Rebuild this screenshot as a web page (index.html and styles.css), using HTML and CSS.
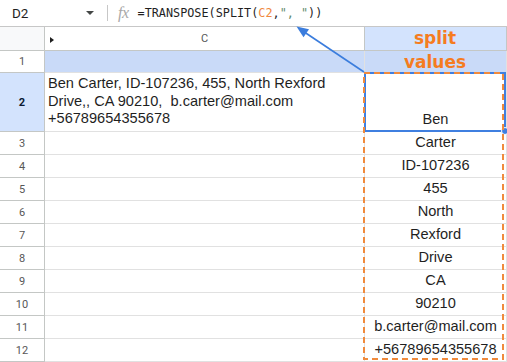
FILE: index.html
```html
<!DOCTYPE html>
<html>
<head>
<meta charset="utf-8">
<link rel="stylesheet" href="styles.css">
</head>
<body>
<div class="page">
  <div class="fbar">
    <div class="namebox">D2</div>
    <div class="dd"></div>
    <div class="sep"></div>
    <div class="fx">fx</div>
    <div class="formula">=TRANSPOSE(SPLIT(<span class="ref">C2</span>,<span class="str">", "</span>))</div>
  </div>
  <div class="grid">
    <div class="corner"></div>
    <div class="colhead colc"><span class="tri"></span><span class="clab">C</span></div>
    <div class="colhead sel"></div>

    <div class="rowhead">1</div>
    <div class="cell fill"></div>
    <div class="cell fill"></div>

    <div class="rowhead selrow">2</div>
    <div class="cell wrap">Ben Carter, ID-107236, 455, North Rexford Drive,, CA 90210,&nbsp; b.carter@mail.com +56789654355678</div>
    <div class="cell val">Ben</div>

    <div class="rowhead">3</div><div class="cell"></div><div class="cell val">Carter</div>
    <div class="rowhead">4</div><div class="cell"></div><div class="cell val">ID-107236</div>
    <div class="rowhead">5</div><div class="cell"></div><div class="cell val">455</div>
    <div class="rowhead">6</div><div class="cell"></div><div class="cell val">North</div>
    <div class="rowhead">7</div><div class="cell"></div><div class="cell val">Rexford</div>
    <div class="rowhead">8</div><div class="cell"></div><div class="cell val">Drive</div>
    <div class="rowhead">9</div><div class="cell"></div><div class="cell val">CA</div>
    <div class="rowhead">10</div><div class="cell"></div><div class="cell val">90210</div>
    <div class="rowhead">11</div><div class="cell"></div><div class="cell val">b.carter@mail.com</div>
    <div class="rowhead">12</div><div class="cell"></div><div class="cell val">+56789654355678</div>
  </div>

  <div class="selection"><span class="handle"></span></div>
  <div class="note">split<br>values</div>
  <svg class="annot" width="507" height="362" viewBox="0 0 507 362">
    <rect x="364" y="73" width="139" height="286" fill="none" stroke="#f08a3c" stroke-width="2" stroke-dasharray="6 4"/>
    <line x1="364" y1="72" x2="305" y2="32.5" stroke="#3b7ddd" stroke-width="1.6"/>
    <polygon points="296.5,26.5 309,29.2 303.5,37.2" fill="#3b7ddd"/>
  </svg>
</div>
</body>
</html>
```
FILE: styles.css
```css
html, body {
  margin: 0;
  padding: 0;
  background: #ffffff;
}
body {
  width: 507px;
  height: 362px;
  overflow: hidden;
  font-family: "Liberation Sans", Arial, sans-serif;
}
.page {
  position: relative;
  width: 507px;
  height: 362px;
}
.fbar {
  height: 27px;
  box-sizing: border-box;
  border-bottom: 1px solid #c7c7c7;
  display: flex;
  align-items: center;
}
.namebox {
  font-family: Roboto, "Liberation Sans", sans-serif;
  font-size: 13.5px;
  color: #1f1f1f;
  margin-left: 12px;
  width: 74px;
}
.dd {
  width: 0;
  height: 0;
  border-left: 4px solid transparent;
  border-right: 4px solid transparent;
  border-top: 4px solid #444746;
  margin-left: 0;
}
.sep {
  width: 1px;
  height: 16px;
  background: #c7c7c7;
  margin-left: 13px;
}
.fx {
  font-family: "Liberation Serif", serif;
  font-style: italic;
  font-size: 16px;
  color: #a8a8a8;
  margin-left: 10px;
  letter-spacing: -0.5px;
}
.formula {
  font-family: "DejaVu Sans Mono", monospace;
  font-size: 11.8px;
  color: #1f1f1f;
  margin-left: 9px;
  white-space: pre;
}
.ref { color: #f0883e; }
.str { color: #5f8a6a; }

.grid {
  display: grid;
  grid-template-columns: 45px 320px 142px;
  grid-template-rows: 24px 22px 59px repeat(10, 23px);
}
.grid > div {
  box-sizing: border-box;
}
.corner {
  background: #f8f9fa;
  border-right: 1px solid #c4c7c5;
  border-bottom: 1px solid #c4c7c5;
}
.colhead {
  background: #ffffff;
  border-right: 1px solid #c4c7c5;
  border-bottom: 1px solid #c4c7c5;
  font-family: Roboto, "Liberation Sans", sans-serif;
  font-size: 11px;
  color: #575757;
  display: flex;
  align-items: center;
  position: relative;
}
.colc .clab {
  flex: 1;
  text-align: center;
}
.tri {
  position: absolute;
  left: 5px;
  top: 10px;
  width: 0;
  height: 0;
  border-top: 3px solid transparent;
  border-bottom: 3px solid transparent;
  border-left: 4px solid #1f1f1f;
}
.colhead.sel {
  background: #d3e3fd;
}
.rowhead {
  background: #ffffff;
  border-right: 1px solid #c4c7c5;
  border-bottom: 1px solid #c4c7c5;
  font-family: Roboto, "Liberation Sans", sans-serif;
  font-size: 11px;
  color: #575757;
  display: flex;
  align-items: center;
  justify-content: center;
}
.rowhead.selrow {
  background: #d3e3fd;
  color: #0b1a33;
  font-weight: bold;
}
.cell {
  border-right: 1px solid #e1e1e1;
  border-bottom: 1px solid #e1e1e1;
  font-size: 14.6px;
  line-height: 17.6px;
  color: #1f1f1f;
}
.cell.fill {
  background: #c9daf8;
}
.cell.wrap {
  padding: 2px 4px 3px 3px;
  display: flex;
  align-items: flex-end;
}
.cell.val {
  display: flex;
  align-items: flex-end;
  justify-content: center;
  padding-bottom: 2px;
  white-space: nowrap;
}

.selection {
  position: absolute;
  left: 364px;
  top: 72px;
  width: 142px;
  height: 60px;
  box-sizing: border-box;
  border: 2px solid #3f7fe0;
}
.handle {
  position: absolute;
  right: -5px;
  bottom: -5px;
  width: 6px;
  height: 6px;
  border-radius: 50%;
  background: #3f7fe0;
  border: 1px solid #ffffff;
}
.note {
  position: absolute;
  left: 364px;
  top: 26px;
  width: 142px;
  text-align: center;
  font-family: "DejaVu Sans", sans-serif;
  font-weight: bold;
  font-size: 17px;
  line-height: 24px;
  color: #f57c1f;
}
.annot {
  position: absolute;
  left: 0;
  top: 0;
  pointer-events: none;
}
```
